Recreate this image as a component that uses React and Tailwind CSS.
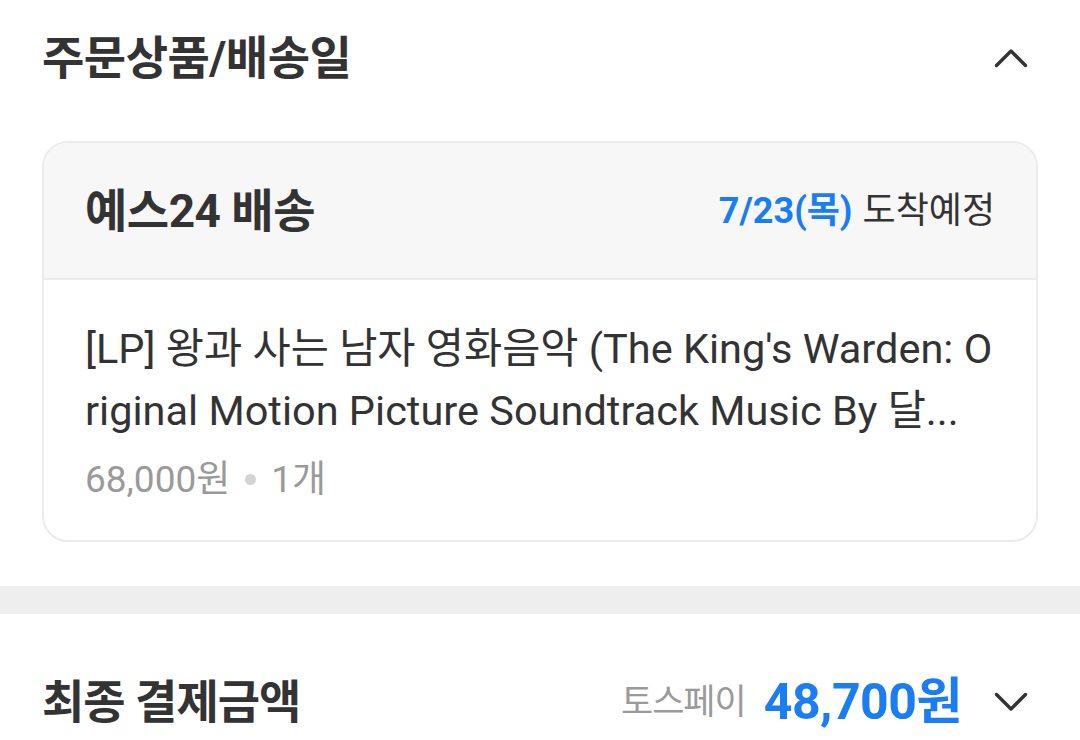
import React from "react";

const FONT = { fontFamily: '"Roboto", "Noto Sans CJK KR", sans-serif' };

function Chevron({ up }) {
  return (
    <svg width="34" height="20" viewBox="0 0 34 20" fill="none" className="shrink-0">
      <polyline
        points={up ? "2.5,17.5 17,3 31.5,17.5" : "2.5,2.5 17,17 31.5,2.5"}
        stroke="#333333"
        strokeWidth="3.4"
        strokeLinecap="round"
        strokeLinejoin="round"
      />
    </svg>
  );
}

export default function App() {
  return (
    <div className="w-[1080px] h-[740px] bg-white overflow-hidden text-[#333333]" style={FONT}>
      <div className="px-[42px]">
        <div className="h-[116px] flex items-center justify-between">
          <h2 className="text-[46px] font-bold leading-none tracking-[-0.5px]">주문상품/배송일</h2>
          <div className="pr-[10px]">
            <Chevron up />
          </div>
        </div>

        <div className="mt-[25px] border-2 border-[#ebebeb] rounded-[26px] overflow-hidden">
          <div className="h-[137px] bg-[#f7f7f7] border-b-2 border-[#ebebeb] flex items-center justify-between px-[41px]">
            <div className="text-[46px] font-bold leading-none tracking-[-0.5px]">예스24 배송</div>
            <div className="text-[36px] leading-none flex items-baseline">
              <span className="font-bold text-[#1a7df1]">7/23(목)</span>
              <span className="ml-[10px]">도착예정</span>
            </div>
          </div>
          <div className="h-[260px] px-[41px] pt-[38px]">
            <div className="text-[41.5px] leading-[62px] whitespace-nowrap">
              <div>[LP] 왕과 사는 남자 영화음악 (The King's Warden: O</div>
              <div>riginal Motion Picture Soundtrack Music By 달...</div>
            </div>
            <div className="mt-[17px] h-[40px] flex items-center text-[37px] text-[#9a9a9a] leading-none">
              <span>68,000원</span>
              <span className="mx-[15px] w-[11px] h-[11px] rounded-full bg-[#d4d4d4]"></span>
              <span>1개</span>
            </div>
          </div>
        </div>
      </div>

      <div className="mt-[44px] h-[28px] bg-[#eeeeee]"></div>

      <div className="px-[42px] h-[176px] flex items-center justify-between">
        <h2 className="text-[46px] font-bold leading-none tracking-[-1px]">최종 결제금액</h2>
        <div className="flex items-center">
          <span className="text-[35px] text-[#9a9a9a] leading-none tracking-[-1px]">토스페이</span>
          <span className="ml-[18px] text-[50px] font-bold text-[#1a7df1] leading-none tracking-[-0.5px]">48,700원</span>
          <div className="ml-[32px] pr-[10px]">
            <Chevron />
          </div>
        </div>
      </div>
    </div>
  );
}
